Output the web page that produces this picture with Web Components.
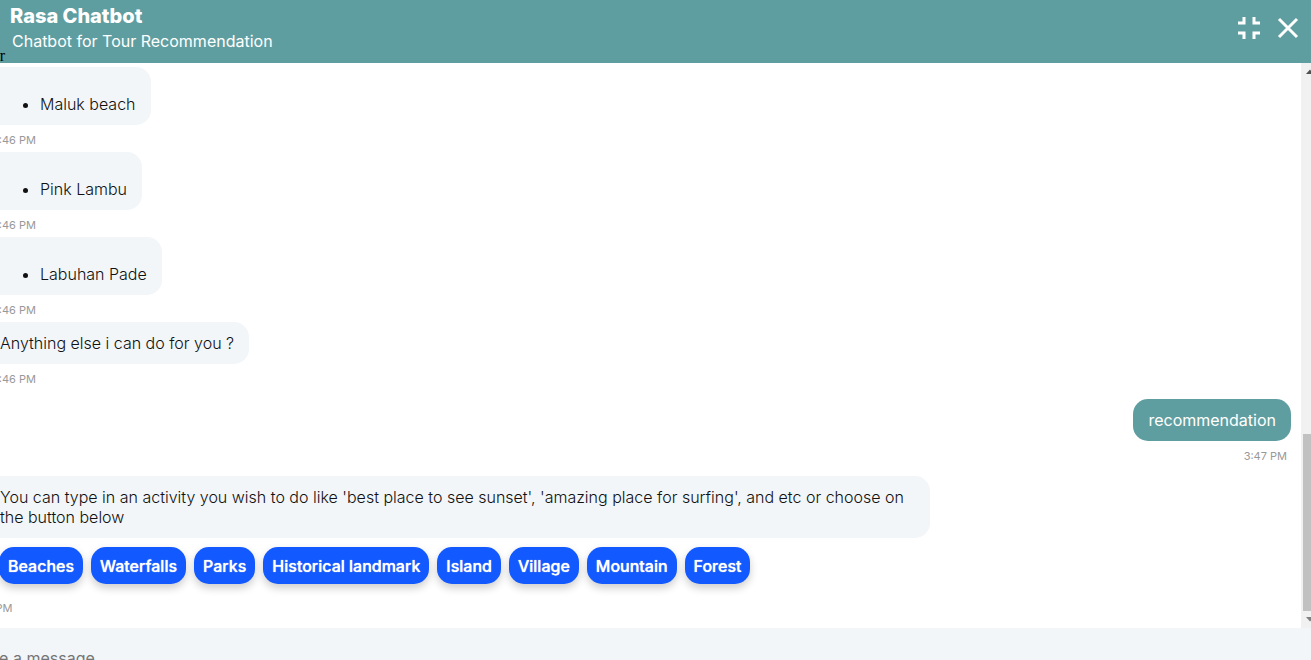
<!DOCTYPE html>
<html lang="en">
<head>
<meta charset="utf-8">
<title>Rasa Chatbot</title>
<style>
  html, body { margin: 0; height: 100%; overflow: hidden; background: #fff; }
  body { font-family: Inter, "Liberation Sans", sans-serif; font-size: 16px; line-height: 20px; color: #111; }
</style>
</head>
<body>
<chat-window></chat-window>
<script>
const define = (name, html) => {
  const template = document.createElement('template');
  template.innerHTML = html;
  customElements.define(name, class extends HTMLElement {
    constructor() {
      super();
      this.attachShadow({ mode: 'open' }).append(template.content.cloneNode(true));
    }
  });
};

define('chat-header', `
<style>
  :host { display: flex; justify-content: space-between; position: relative; box-sizing: border-box; height: 63px; padding: 4px 11px 0 10px; background: #5f9ea0; color: #fff; }
  h1 { margin: 0; font-size: 20px; line-height: 24px; font-weight: 800; }
  p { margin: 3px 0 0 2px; }
  nav { display: flex; gap: 15px; padding-top: 12px; }
  button { display: block; width: 24px; height: 24px; padding: 0; border: 0; background: none; color: inherit; }
  svg { display: block; }
  .stray { position: absolute; right: 100%; margin-right: -5px; bottom: -1px; font: 16px/16px "Liberation Serif", serif; color: #000; }
</style>
<div><h1><slot name="title"></slot></h1><p><slot name="subtitle"></slot></p></div>
<nav>
  <button aria-label="Exit full screen"><svg width="24" height="24" viewBox="0 0 24 24" fill="none" stroke="currentColor" stroke-width="3"><path d="M1 7H7V1M17 1V7H23M1 17H7V23M17 23V17H23"/></svg></button>
  <button aria-label="Close"><svg width="24" height="24" viewBox="0 0 24 24" fill="none" stroke="currentColor" stroke-width="3"><path d="M3 3L21 21M21 3L3 21"/></svg></button>
</nav>
<span class="stray">r</span>`);

define('chat-message', `
<style>
  :host { display: flex; flex-direction: column; align-items: flex-start; margin-left: -15px; }
  :host([from="user"]) { align-items: flex-end; margin: 8px 10px 8px 0; }
  .bubble { box-sizing: border-box; max-width: 945px; padding: 11px 15px; border-radius: 15px; background: #f2f6f9; font-weight: 350; }
  :host([from="user"]) .bubble { background: #5f9ea0; color: #fff; font-weight: 400; }
  ::slotted(ul) { margin: 16px 0 0; padding-left: 40px; }
  time { padding: 8px 4px 5px 7px; font-size: 11px; line-height: 14px; color: #999; }
  :host([choices]) time { margin-left: -23px; padding-top: 17px; padding-bottom: 13px; }
</style>
<div class="bubble"><slot></slot></div>
<slot name="choices"></slot>
<time><slot name="time"></slot></time>`);

define('choice-list', `
<style>:host { display: flex; flex-wrap: wrap; gap: 8px; margin: 9px 0 0 14px; }</style>
<slot></slot>`);

define('choice-button', `
<style>
  :host { display: block; }
  button { display: block; height: 37px; padding: 0 9px; border: 0; border-radius: 15px; background: #1259ff; color: #fff; font: inherit; font-weight: 500; line-height: 20px; text-shadow: 0 0 1px #fff; box-shadow: 0 4px 8px rgba(0,0,0,.2); }
</style>
<button><slot></slot></button>`);

define('scroll-rail', `
<style>
  :host { display: flex; flex-direction: column; width: 10px; background: #f1f1f1; overflow: hidden; }
  svg { display: block; flex: none; margin-left: 2px; }
  .track { flex: 1; display: flex; flex-direction: column; justify-content: flex-end; margin-left: 2px; }
  .thumb { height: 177px; background: #c1c1c1; }
</style>
<svg width="15" height="17" viewBox="0 0 15 17" fill="#505050"><path d="M3 11L7 6.500L11 11Z"/></svg>
<div class="track"><div class="thumb"></div></div>
<svg width="15" height="17" viewBox="0 0 15 17" fill="#808080"><path d="M3 6H11L7 10.500Z"/></svg>`);

define('chat-composer', `
<style>
  :host { display: block; padding: 16px 20px 16px 0; background: #f2f6f9; }
  input { display: block; box-sizing: border-box; width: 100%; margin-left: -29px; height: 28px; padding: 0; border: 0; background: none; font: inherit; outline: 0; }
  input::placeholder { color: #757575; opacity: 1; }
</style>
<input type="text" placeholder="Type a message" aria-label="Type a message">`);

define('chat-window', `
<style>
  :host { display: block; }
  main { display: flex; }
  .log { flex: 1; min-width: 0; padding-top: 4px; }
</style>
<chat-header><span slot="title">Rasa Chatbot</span><span slot="subtitle">Chatbot for Tour Recommendation</span></chat-header>
<main>
  <div class="log">
    <chat-message><ul><li>Maluk beach</li></ul><span slot="time">3:46 PM</span></chat-message>
    <chat-message><ul><li>Pink Lambu</li></ul><span slot="time">3:46 PM</span></chat-message>
    <chat-message><ul><li>Labuhan Pade</li></ul><span slot="time">3:46 PM</span></chat-message>
    <chat-message>Anything else i can do for you ?<span slot="time">3:46 PM</span></chat-message>
    <chat-message from="user">recommendation<span slot="time">3:47 PM</span></chat-message>
    <chat-message choices>You can type in an activity you wish to do like 'best place to see sunset', 'amazing place for surfing', and etc or choose on the button below
      <choice-list slot="choices">
        <choice-button>Beaches</choice-button><choice-button>Waterfalls</choice-button><choice-button>Parks</choice-button><choice-button>Historical landmark</choice-button><choice-button>Island</choice-button><choice-button>Village</choice-button><choice-button>Mountain</choice-button><choice-button>Forest</choice-button>
      </choice-list>
      <span slot="time">3:47 PM</span></chat-message>
  </div>
  <scroll-rail></scroll-rail>
</main>
<chat-composer></chat-composer>
`);
</script>
</body>
</html>
